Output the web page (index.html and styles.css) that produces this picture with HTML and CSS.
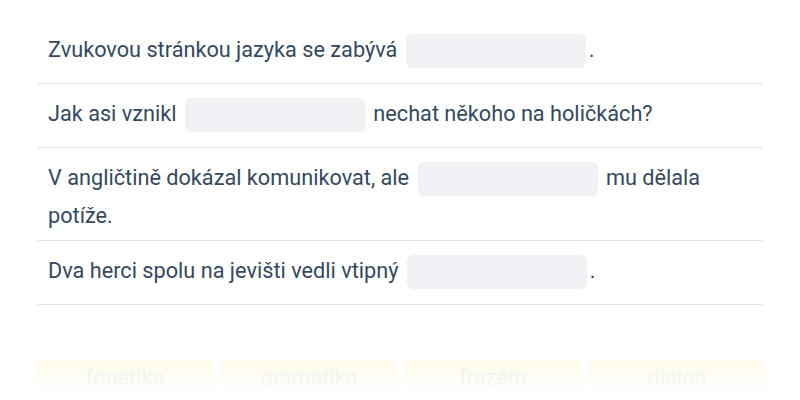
FILE: index.html
```html
<!DOCTYPE html>
<html lang="cs">

<head>
    <meta charset="UTF-8">
    <meta name="viewport" content="width=device-width, initial-scale=1.0">
    <title>Doplň slovo</title>
    <link rel="stylesheet" href="styles.css">
</head>

<body>
    <div class="main">
        <ul class="list">
            <li class="item">
                Zvukovou stránkou jazyka se zabývá <span class="blank"></span>.
            </li>
            <li class="item">
                Jak asi vznikl <span class="blank"></span> nechat někoho na holičkách?
            </li>
            <li class="item">
                V angličtině dokázal komunikovat, ale <span class="blank"></span> mu dělala potíže.
            </li>
            <li class="item">
                Dva herci spolu na jevišti vedli vtipný <span class="blank"></span>.
            </li>
        </ul>

        <div class="words">
            <div class="word">fonetika</div>
            <div class="word">gramatika</div>
            <div class="word">frazém</div>
            <div class="word">dialog</div>
        </div>
    </div>
</body>

</html>
```

FILE: styles.css
```css
* {
    margin: 0;
    padding: 0;
    box-sizing: border-box;
}

body {
    font-family: Roboto, "Liberation Sans", sans-serif;
    color: #34495e;
    background-color: #fff;
    overflow: hidden;
}

.main {
    position: relative;
    height: 400px;
    padding: 20px 38px 0;
}

.list {
    list-style: none;
}

.item {
    font-size: 21.7px;
    line-height: 29px;
    padding: 10px;
    border-bottom: 1px solid #dfdfdf;
}

.blank {
    display: inline-block;
    vertical-align: middle;
    width: 180px;
    height: 34px;
    margin: 4px 3px 5px;
    border-radius: 6px;
    background-color: #f0f1f5;
}

.words {
    display: grid;
    grid-template-columns: repeat(4, 1fr);
    column-gap: 6px;
    margin: 55px -4px 0 -2px;
}

.word {
    height: 44px;
    padding-top: 5px;
    border-radius: 6px;
    background: linear-gradient(#fefbec, #fffdf7 55%, #fff);
    color: #f2f2f2;
    font-size: 21.7px;
    line-height: 26px;
    text-align: center;
}

/* fade out at the bottom */
.main::after {
    content: "";
    position: absolute;
    left: 0;
    right: 0;
    bottom: 0;
    height: 26px;
    background: linear-gradient(rgba(255, 255, 255, 0), #fff);
}
```
